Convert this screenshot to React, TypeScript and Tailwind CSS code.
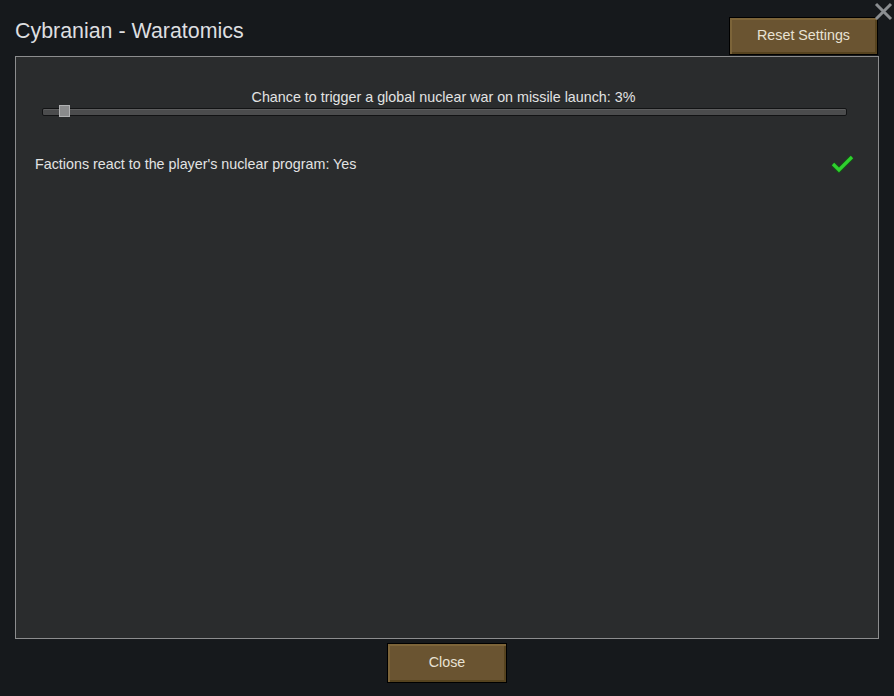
import { useState } from 'react';

function GameButton({ label, className }: { label: string; className: string }) {
  return (
    <button
      className={`border border-black bg-[#6a5431] shadow-[inset_2px_2px_0_#7c6439,inset_-2px_-2px_0_#56431f] text-[14.3px] text-[#e8e2d4] ${className}`}
    >
      {label}
    </button>
  );
}

export default function App() {
  const [chance] = useState(3);

  return (
    <div
      className="relative w-[894px] h-[696px] bg-[#16191c] flex flex-col px-[15px]"
      style={{ fontFamily: '"Liberation Sans", Arial, sans-serif' }}
    >
      <button className="absolute top-[2px] right-[1px] w-[19px] h-[19px]" aria-label="Close window">
        <svg viewBox="0 0 19 19" className="w-full h-full">
          <path d="M2 2 L17 17 M17 2 L2 17" stroke="#8b8e91" strokeWidth="3" />
        </svg>
      </button>

      <div className="h-[56px] flex items-start justify-between">
        <h1 className="mt-[18px] text-[21.4px] leading-[26px] text-[#dedfe0]">Cybranian - Waratomics</h1>
        <GameButton label="Reset Settings" className="mt-[17px] mr-px w-[149px] h-[38px]" />
      </div>

      <div className="h-[583px] border border-[#8c8d8e] bg-[#2a2c2d] px-[19px] pt-[31px]">
        <div className="flex flex-col items-center">
          <div className="pr-[7px] text-[14.3px] leading-[18px] text-[#e2e3e3]">
            Chance to trigger a global nuclear war on missile launch: {chance}%
          </div>
          <div className="relative w-full mt-[2px] h-[8px]">
            <div className="absolute left-[7px] right-[12px] inset-y-0 rounded-[2px] border border-[#121314] bg-[#4b4c4d] shadow-[inset_0_1px_0_#5c5d5e]" />
            <div className="absolute left-[24px] top-[-3px] w-[11px] h-[12px] border border-[#b0b1b2] bg-[#8a8b8c]" />
          </div>
        </div>

        <div className="mt-[38px] flex items-center justify-between">
          <span className="text-[14.3px] leading-[18px] text-[#e2e3e3]">
            Factions react to the player's nuclear program: Yes
          </span>
          <svg width="24" height="20" viewBox="0 0 24 20" className="mr-[4px] -mt-[1px]">
            <path d="M2 11 L8 17 L21 4" fill="none" stroke="#145a14" strokeWidth="5" strokeLinejoin="miter" />
            <path d="M2 11 L8 17 L21 4" fill="none" stroke="#2fd12f" strokeWidth="3.2" strokeLinejoin="miter" />
          </svg>
        </div>
      </div>

      <div className="flex justify-center pt-[4px]">
        <GameButton label="Close" className="w-[120px] h-[40px]" />
      </div>
    </div>
  );
}
